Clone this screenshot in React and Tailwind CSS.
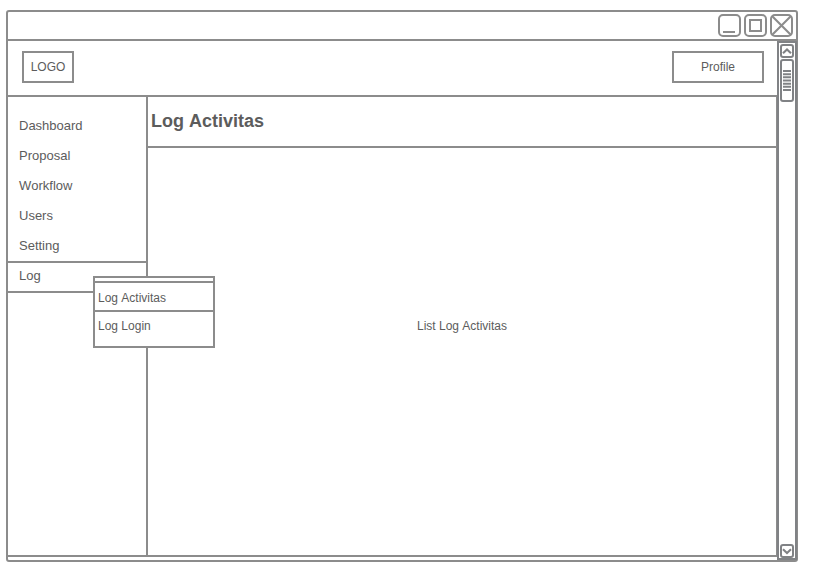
const navItems = ["Dashboard", "Proposal", "Workflow", "Users", "Setting"];

function WindowButton({ children }) {
  return (
    <div className="flex h-[23px] w-[23px] items-center justify-center rounded-[5px] border-2 border-[#8c8c8c]">
      {children}
    </div>
  );
}

function TitleBar() {
  return (
    <div className="flex h-[29px] shrink-0 justify-end gap-[3px] border-b-2 border-[#8c8c8c] pt-[2px] pr-[3px]">
      <WindowButton>
        <div className="mt-[12px] mr-px h-[2px] w-3 bg-[#8c8c8c]" />
      </WindowButton>
      <WindowButton>
        <div className="h-[13px] w-[13px] border-2 border-[#8c8c8c]" />
      </WindowButton>
      <WindowButton>
        <svg className="h-[19px] w-[19px]" viewBox="0 0 19 19" fill="none" stroke="#8c8c8c" strokeWidth="2.1">
          <path d="M0 0L19 19M19 0L0 19" />
        </svg>
      </WindowButton>
    </div>
  );
}

function ScrollArrow({ d }) {
  return (
    <div className="flex h-[14px] w-[14px] shrink-0 items-center justify-center rounded-[3px] border-2 border-[#808285]">
      <svg className="h-[10px] w-[10px]" viewBox="0 0 10 10" fill="none" stroke="#808285" strokeWidth="2.1">
        <path d={d} />
      </svg>
    </div>
  );
}

function Scrollbar() {
  return (
    <div className="relative -mr-px -ml-px flex w-5 shrink-0 flex-col items-center border-2 border-[#808285] bg-white pt-px">
      <ScrollArrow d="M1 7.3L5 3.5L9 7.3" />
      <div className="mt-px flex h-[43px] w-[14px] flex-col items-center rounded-[3px] border-2 border-[#808285] pt-[9px]">
        <svg className="h-[21px] w-2 shrink-0" viewBox="0 0 8 21" stroke="#808285" strokeWidth="1.9">
          <path d="M0 1H8M0 4.2H8M0 7.3H8M0 10.5H8M0 13.7H8M0 16.8H8M0 20H8" />
        </svg>
      </div>
      <div className="grow" />
      <ScrollArrow d="M1 3.2L5 7L9 3.2" />
    </div>
  );
}

function SubMenu() {
  return (
    <div className="absolute top-[13px] left-[85px] z-10 h-[72px] w-[122px] border-2 border-[#8c8c8c] bg-white text-[12px]">
      <div className="h-[5px] border-b-2 border-[#8c8c8c]" />
      <div className="flex h-[29px] items-center border-b-2 border-[#8c8c8c] pt-[3px] pl-[3px]">Log Activitas</div>
      <div className="flex h-[28px] items-center pl-[3px]">Log Login</div>
    </div>
  );
}

export default function App() {
  return (
    <div className="h-[581px] w-[817px] overflow-hidden bg-white pt-[10px] pl-[6px] font-['Liberation_Sans',Arial,sans-serif] text-[#5c5c5c] [font-kerning:none]">
      <div className="flex h-[552px] w-[792px] flex-col rounded-[3px] border-2 border-[#8c8c8c]">
        <TitleBar />
        <div className="flex min-h-0 grow">
          <div className="flex w-[770px] shrink-0 flex-col">
            <header className="flex h-14 items-start justify-between border-b-2 border-[#8c8c8c] pt-[10px] pr-[14px] pl-[14px] text-[12px]">
              <div className="flex h-8 w-[52px] items-center justify-center border-2 border-[#8c8c8c]">LOGO</div>
              <div className="flex h-8 w-[92px] items-center justify-center border-2 border-[#8c8c8c]">Profile</div>
            </header>
            <div className="flex h-[460px] border-r-2 border-b-2 border-[#8c8c8c]">
              <nav className="w-[140px] shrink-0 border-r-2 border-[#8c8c8c] pt-[14px] text-[13px]">
                {navItems.map((item) => (
                  <div key={item} className="flex h-[30px] items-center pl-[11px]">
                    {item}
                  </div>
                ))}
                <div className="relative flex h-8 items-center border-y-2 border-[#8c8c8c] pb-[2px] pl-[11px]">
                  Log
                  <SubMenu />
                </div>
              </nav>
              <main className="flex grow flex-col">
                <h1 className="flex h-[51px] shrink-0 items-center border-b-2 border-[#8c8c8c] pl-[3px] text-[18px] font-bold">
                  Log Activitas
                </h1>
                <div className="flex h-[356px] items-center justify-center text-[12px]">List Log Activitas</div>
              </main>
            </div>
          </div>
          <Scrollbar />
        </div>
      </div>
    </div>
  );
}
